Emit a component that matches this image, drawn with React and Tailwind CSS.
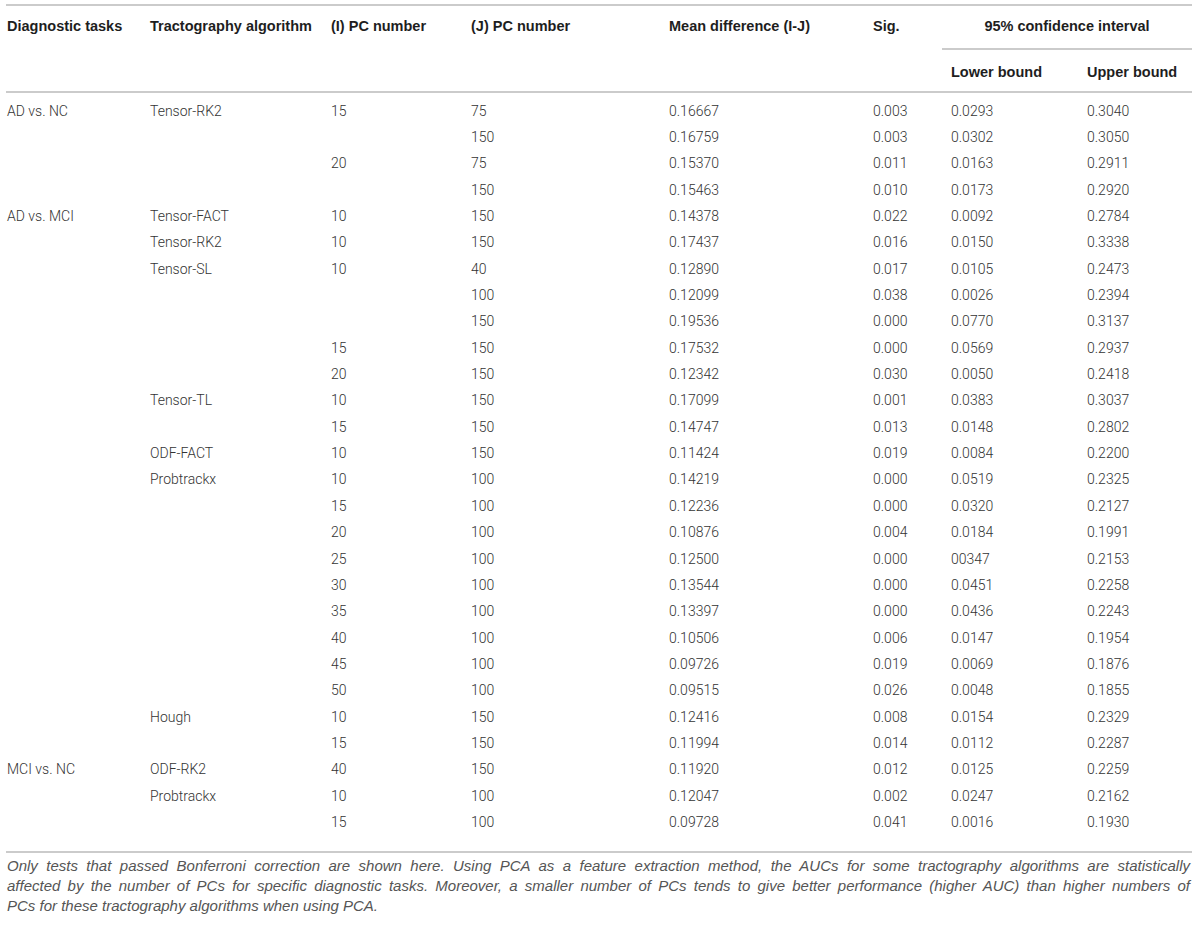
import React from "react";

const rows = [
  ["AD vs. NC", "Tensor-RK2", "15", "75", "0.16667", "0.003", "0.0293", "0.3040"],
  ["", "", "", "150", "0.16759", "0.003", "0.0302", "0.3050"],
  ["", "", "20", "75", "0.15370", "0.011", "0.0163", "0.2911"],
  ["", "", "", "150", "0.15463", "0.010", "0.0173", "0.2920"],
  ["AD vs. MCI", "Tensor-FACT", "10", "150", "0.14378", "0.022", "0.0092", "0.2784"],
  ["", "Tensor-RK2", "10", "150", "0.17437", "0.016", "0.0150", "0.3338"],
  ["", "Tensor-SL", "10", "40", "0.12890", "0.017", "0.0105", "0.2473"],
  ["", "", "", "100", "0.12099", "0.038", "0.0026", "0.2394"],
  ["", "", "", "150", "0.19536", "0.000", "0.0770", "0.3137"],
  ["", "", "15", "150", "0.17532", "0.000", "0.0569", "0.2937"],
  ["", "", "20", "150", "0.12342", "0.030", "0.0050", "0.2418"],
  ["", "Tensor-TL", "10", "150", "0.17099", "0.001", "0.0383", "0.3037"],
  ["", "", "15", "150", "0.14747", "0.013", "0.0148", "0.2802"],
  ["", "ODF-FACT", "10", "150", "0.11424", "0.019", "0.0084", "0.2200"],
  ["", "Probtrackx", "10", "100", "0.14219", "0.000", "0.0519", "0.2325"],
  ["", "", "15", "100", "0.12236", "0.000", "0.0320", "0.2127"],
  ["", "", "20", "100", "0.10876", "0.004", "0.0184", "0.1991"],
  ["", "", "25", "100", "0.12500", "0.000", "00347", "0.2153"],
  ["", "", "30", "100", "0.13544", "0.000", "0.0451", "0.2258"],
  ["", "", "35", "100", "0.13397", "0.000", "0.0436", "0.2243"],
  ["", "", "40", "100", "0.10506", "0.006", "0.0147", "0.1954"],
  ["", "", "45", "100", "0.09726", "0.019", "0.0069", "0.1876"],
  ["", "", "50", "100", "0.09515", "0.026", "0.0048", "0.1855"],
  ["", "Hough", "10", "150", "0.12416", "0.008", "0.0154", "0.2329"],
  ["", "", "15", "150", "0.11994", "0.014", "0.0112", "0.2287"],
  ["MCI vs. NC", "ODF-RK2", "40", "150", "0.11920", "0.012", "0.0125", "0.2259"],
  ["", "Probtrackx", "10", "100", "0.12047", "0.002", "0.0247", "0.2162"],
  ["", "", "15", "100", "0.09728", "0.041", "0.0016", "0.1930"],
];

const cols = "grid grid-cols-[143px_181px_140px_198px_204px_70px_136px_114px]";
const cellPad = ["pl-px", "pl-px", "pl-px", "pl-px", "pl-px", "pl-px", "pl-[9px]", "pl-[9px]"];

const Line = () => <div className="h-[2px] bg-[#cbcbcb]" />;

const App = () => {
  return (
    <div className="w-[1200px] bg-white pt-[4px] pl-[6px]">
      <div className="w-[1186px]">
        <Line />
        <div
          className={`${cols} grid-rows-[44px_41px] font-['Liberation_Sans',Arial,sans-serif] text-[14.5px] font-bold leading-[18px] text-[#1e1e1e]`}
        >
          <div className="row-span-2 pl-px pt-[11px]">Diagnostic tasks</div>
          <div className="row-span-2 pl-px pt-[11px]">Tractography algorithm</div>
          <div className="row-span-2 pl-px pt-[11px]">(I) PC number</div>
          <div className="row-span-2 pl-px pt-[11px]">(J) PC number</div>
          <div className="row-span-2 pl-px pt-[11px]">Mean difference (I-J)</div>
          <div className="row-span-2 pl-px pt-[11px]">Sig.</div>
          <div className="col-span-2 border-b-2 border-[#cbcbcb] pt-[11px] text-center">
            95% confidence interval
          </div>
          <div className="pl-[9px] pt-[13px]">Lower bound</div>
          <div className="pl-[9px] pt-[13px]">Upper bound</div>
        </div>
        <Line />
        <div className="pt-[5px] pb-[15px] font-['Roboto',Arial,sans-serif] text-[14px] font-light text-[#333]">
          {rows.map((r, i) => (
            <div key={i} className={`${cols} h-[26.35px] items-center`}>
              {r.map((c, j) => (
                <div key={j} className={cellPad[j]}>
                  {c}
                </div>
              ))}
            </div>
          ))}
        </div>
        <Line />
        <div className="mt-[3px] pl-px pr-[2px] font-['Liberation_Sans',Arial,sans-serif] text-[15px] italic leading-[20px] text-[#555]">
          <p className="text-justify [text-align-last:justify]">
            Only tests that passed Bonferroni correction are shown here. Using PCA as a feature extraction method, the
            AUCs for some tractography algorithms are statistically
          </p>
          <p className="text-justify [text-align-last:justify]">
            affected by the number of PCs for specific diagnostic tasks. Moreover, a smaller number of PCs tends to give
            better performance (higher AUC) than higher numbers of
          </p>
          <p>PCs for these tractography algorithms when using PCA.</p>
        </div>
      </div>
    </div>
  );
};

export default App;
